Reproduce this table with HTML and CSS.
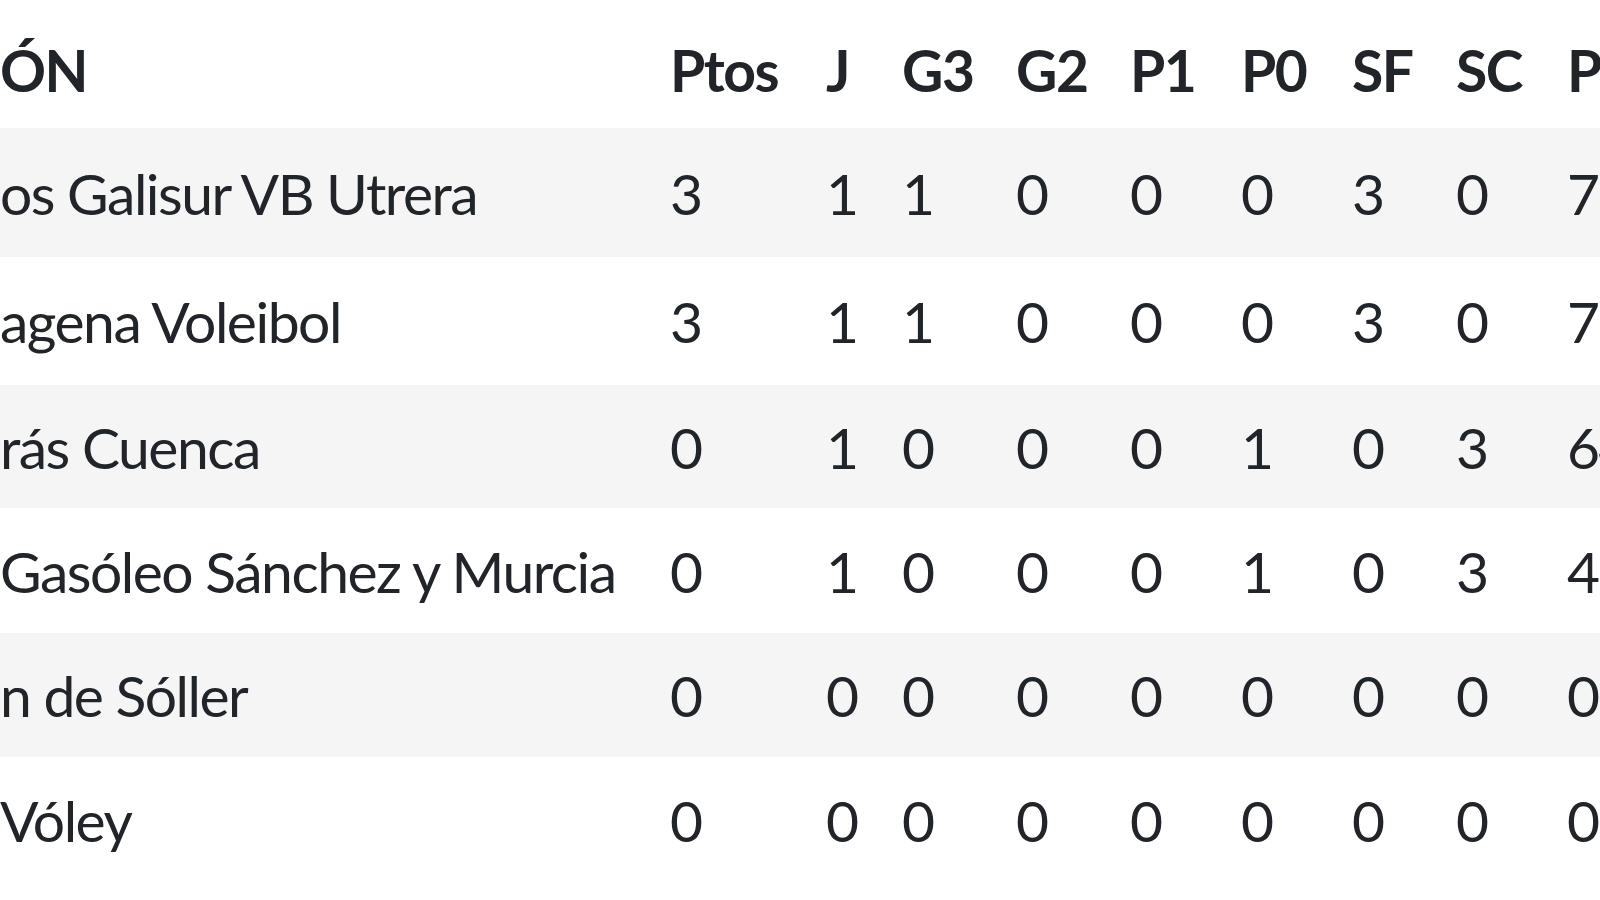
FILE: index.html
```html
<!DOCTYPE html>
<html lang="es">
<head>
<meta charset="utf-8">
<title>Clasificación</title>
<link rel="stylesheet" href="styles.css">
</head>
<body>
<table class="standings">
  <colgroup>
    <col class="c-name"><col class="c-ptos"><col class="c-j"><col class="c-g3"><col class="c-g2"><col class="c-p1"><col class="c-p0"><col class="c-sf"><col class="c-sc"><col class="c-p">
  </colgroup>
  <thead>
    <tr><th>ÓN</th><th>Ptos</th><th>J</th><th>G3</th><th>G2</th><th>P1</th><th>P0</th><th>SF</th><th>SC</th><th>PF</th></tr>
  </thead>
  <tbody>
    <tr><td>os Galisur VB Utrera</td><td>3</td><td>1</td><td>1</td><td>0</td><td>0</td><td>0</td><td>3</td><td>0</td><td>75</td></tr>
    <tr><td>agena Voleibol</td><td>3</td><td>1</td><td>1</td><td>0</td><td>0</td><td>0</td><td>3</td><td>0</td><td>75</td></tr>
    <tr><td>rás Cuenca</td><td>0</td><td>1</td><td>0</td><td>0</td><td>0</td><td>1</td><td>0</td><td>3</td><td>64</td></tr>
    <tr><td>Gasóleo Sánchez y Murcia</td><td>0</td><td>1</td><td>0</td><td>0</td><td>0</td><td>1</td><td>0</td><td>3</td><td>41</td></tr>
    <tr><td>n de Sóller</td><td>0</td><td>0</td><td>0</td><td>0</td><td>0</td><td>0</td><td>0</td><td>0</td><td>0</td></tr>
    <tr><td>Vóley</td><td>0</td><td>0</td><td>0</td><td>0</td><td>0</td><td>0</td><td>0</td><td>0</td><td>0</td></tr>
  </tbody>
</table>
</body>
</html>
```
FILE: styles.css
```css
html, body {
  margin: 0;
  padding: 0;
  background: #ffffff;
  overflow: hidden;
}
body {
  width: 1600px;
  height: 900px;
  font-family: Lato, "Open Sans", sans-serif;
  color: #212529;
}
.standings {
  border-collapse: collapse;
  table-layout: fixed;
  width: 1600px;
  font-size: 57px;
  letter-spacing: -1.5px;
}
.c-name { width: 670px; }
.c-ptos { width: 156px; }
.c-j { width: 76px; }
.c-g3 { width: 114px; }
.c-g2 { width: 114px; }
.c-p1 { width: 111px; }
.c-p0 { width: 111px; }
.c-sf { width: 104px; }
.c-sc { width: 111px; }
.c-p { width: 33px; }
.standings th,
.standings td {
  padding: 0;
  text-align: left;
  white-space: nowrap;
  overflow: hidden;
  vertical-align: middle;
}
.standings th {
  font-weight: 700;
  height: 128px;
  padding-top: 12px;
  box-sizing: border-box;
}
.standings td {
  font-weight: 400;
  padding-top: 0;
}
.standings tbody tr:nth-child(odd) { background: #f5f5f5; }
.standings tbody tr:nth-child(1) { height: 129px; }
.standings tbody tr:nth-child(2) { height: 128px; }
.standings tbody tr:nth-child(3) { height: 123px; }
.standings tbody tr:nth-child(4) { height: 125px; }
.standings tbody tr:nth-child(5) { height: 124px; }
.standings tbody tr:nth-child(6) { height: 125px; }
```
